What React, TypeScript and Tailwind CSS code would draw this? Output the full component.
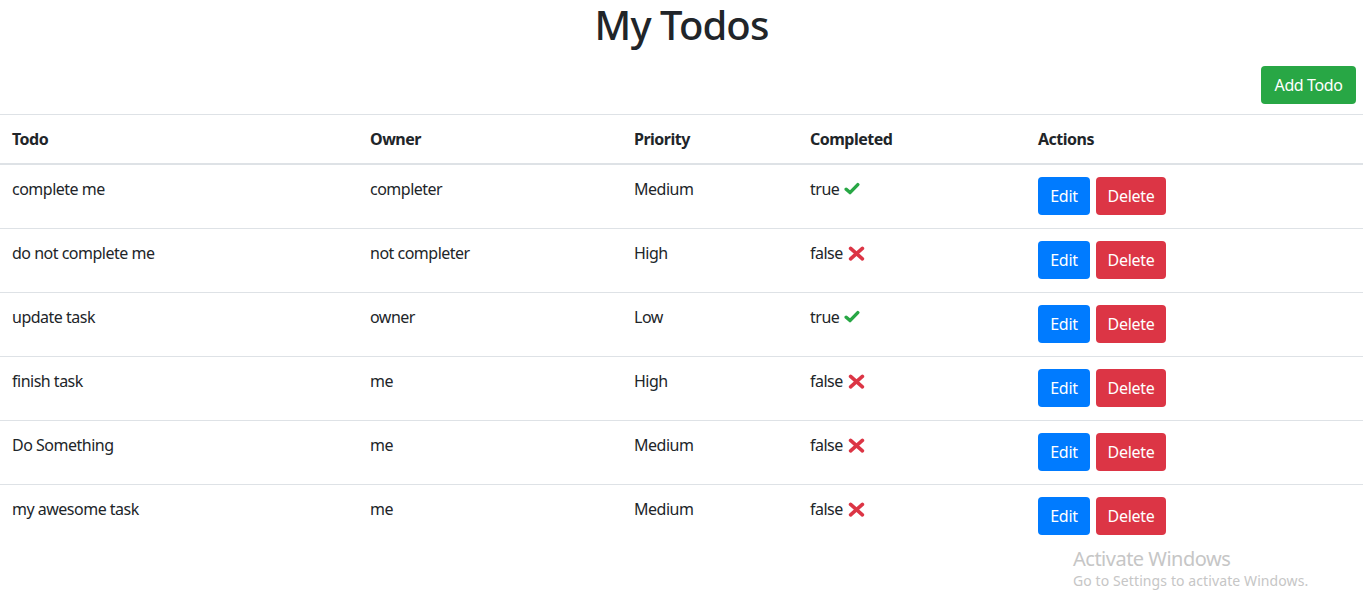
import React from "react";

const todos = [
  { todo: "complete me", owner: "completer", priority: "Medium", done: true },
  { todo: "do not complete me", owner: "not completer", priority: "High", done: false },
  { todo: "update task", owner: "owner", priority: "Low", done: true },
  { todo: "finish task", owner: "me", priority: "High", done: false },
  { todo: "Do Something", owner: "me", priority: "Medium", done: false },
  { todo: "my awesome task", owner: "me", priority: "Medium", done: false },
];

function CheckIcon() {
  return (
    <svg width="16" height="14" viewBox="0 0 16 14" className="shrink-0">
      <polyline
        points="2.2,7.2 6,10.6 13.8,2.6"
        fill="none"
        stroke="#28a745"
        strokeWidth="3.4"
        strokeLinecap="round"
        strokeLinejoin="round"
      />
    </svg>
  );
}

function TimesIcon() {
  return (
    <svg width="17" height="15" viewBox="0 0 17 15" className="shrink-0">
      <g stroke="#dc3545" strokeWidth="3.6" strokeLinecap="round">
        <line x1="2.6" y1="2.4" x2="14.4" y2="12.8" />
        <line x1="14.4" y1="2.4" x2="2.6" y2="12.8" />
      </g>
    </svg>
  );
}

export default function App() {
  return (
    <div
      className="relative min-h-[599px] bg-white text-[#212529] text-[16px] leading-6"
      style={{ fontFamily: '"Noto Sans", "Open Sans", sans-serif' }}
    >
      <h1 className="text-center text-[40px] leading-[48px] font-medium tracking-[-0.9px] pt-[1px] mb-[17px]">
        My Todos
      </h1>
      <div className="flex justify-end pr-[7px] mb-[10px]">
        <button className="h-[38px] w-[95px] rounded-[4px] bg-[#28a745] text-white text-[16px] tracking-[-0.4px]">
          Add Todo
        </button>
      </div>
      <table className="w-full border-collapse table-fixed tracking-[-0.5px]">
        <colgroup>
          <col className="w-[358px]" />
          <col className="w-[264px]" />
          <col className="w-[176px]" />
          <col className="w-[228px]" />
          <col />
        </colgroup>
        <thead>
          <tr className="border-t border-[#dee2e6]">
            {["Todo", "Owner", "Priority", "Completed", "Actions"].map((h) => (
              <th key={h} className="text-left font-bold p-3 border-b-2 border-[#dee2e6] align-bottom">
                {h}
              </th>
            ))}
          </tr>
        </thead>
        <tbody>
          {todos.map((t, i) => (
            <tr key={i} className="border-t border-[#dee2e6] align-top">
              <td className="p-3">{t.todo}</td>
              <td className="p-3">{t.owner}</td>
              <td className="p-3">{t.priority}</td>
              <td className="p-3">
                <span className="inline-flex items-center gap-[5px] h-6">
                  {t.done ? "true" : "false"}
                  {t.done ? <CheckIcon /> : <TimesIcon />}
                </span>
              </td>
              <td className="p-3">
                <div className="flex gap-[6px] h-[39px] tracking-[-0.3px]">
                  <button className="h-[38px] w-[52px] rounded-[4px] bg-[#007bff] text-white text-[16px]">Edit</button>
                  <button className="h-[38px] w-[70px] rounded-[4px] bg-[#dc3545] text-white text-[16px]">Delete</button>
                </div>
              </td>
            </tr>
          ))}
        </tbody>
      </table>
      <div className="absolute left-[1073px] top-[545px] text-[#c6c6c6] pointer-events-none">
        <div className="text-[20px] leading-[28px] tracking-[-0.5px]">Activate Windows</div>
        <div className="text-[14px] leading-[20px] -mt-[2px] tracking-[0.1px]">Go to Settings to activate Windows.</div>
      </div>
    </div>
  );
}
